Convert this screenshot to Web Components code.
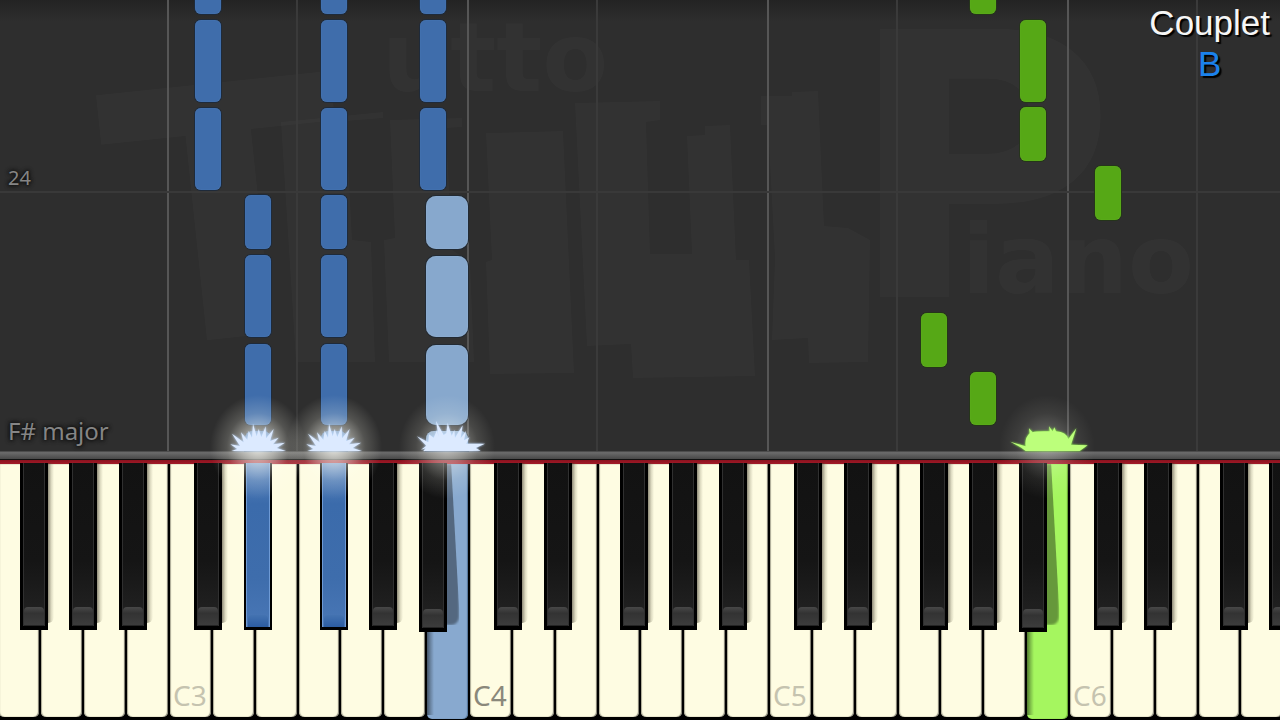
<!DOCTYPE html>
<html lang="en">
<head>
<meta charset="utf-8">
<title>Piano roll</title>
<style>
html,body{height:100%}
body{margin:0;background:#000;overflow:hidden}
</style>
</head>
<body>
<piano-app>
  <piano-roll>
    <bar-label slot="measure">24</bar-label>
    <bar-label slot="key">F# major</bar-label>
  </piano-roll>
  <piano-keyboard></piano-keyboard>
  <section-label slot="section">Couplet<span slot="part">B</span></section-label>
</piano-app>

<script>
const NS = 'http://www.w3.org/2000/svg';
const define = (name, html, setup) => customElements.define(name, class extends HTMLElement {
  constructor() {
    super();
    this.attachShadow({ mode: 'open' }).innerHTML = html;
  }
  connectedCallback() { if (setup && !this.ready) { this.ready = true; setup(this, this.shadowRoot); } }
});

/* Lanes of one octave, in 300ths of its width: semitone -> [left, width] */
const LANES = { 1: [27, 26], 3: [77, 26], 6: [153, 26], 8: [202, 26], 10: [252, 26], 11: [258, 42] };
const laneLeft = (octave, semitone) => (octave - 2) * 300 - 132 + LANES[semitone][0];
const pct = v => `${v / 12.8}%`;

define('piano-app', `
<style>
:host{display:flex;flex-direction:column;position:relative;height:100vh;min-height:400px;overflow:hidden;background:#000;font-family:"Noto Sans",sans-serif}
::slotted(piano-roll){flex:1}
.section{position:absolute;top:2px;right:10px;z-index:4}
</style>
<slot></slot><div class="section"><slot name="section"></slot></div>`);

define('section-label', `
<style>
:host{display:grid;justify-items:center;font:35px/41px "Liberation Sans",Arial,sans-serif;color:#f6f6f6;text-shadow:2px 2px 1px #000}
::slotted(span){color:#1b82ec}
</style>
<div><slot></slot></div><slot name="part"></slot>`);

define('bar-label', `
<style>
:host{display:block;color:#858585;text-shadow:0 0 3px #111,0 0 4px #111,0 0 5px #151515}
</style><slot></slot>`);

define('roll-note', `
<style>
:host{display:block;position:absolute;box-sizing:border-box;border-radius:6px;background:#3f6dab;box-shadow:0 0 0 1px #1e2a3a,inset 0 0 1px #6290cc}
:host([tone=light]){border-radius:10px;background:#87a8cd;box-shadow:0 0 0 1px #222a33,inset 0 0 1px #b4cde8}
:host([tone=green]){background:#56a816;box-shadow:0 0 0 1px #25351a,inset 0 0 1px #75c435}
</style>`);

define('note-flare', `
<style>
:host{display:block;position:absolute;bottom:0;width:0;height:0;z-index:3;pointer-events:none}
.glow{position:absolute;left:-48px;top:-56px;width:96px;height:104px;background:radial-gradient(closest-side,rgba(255,255,248,.8),rgba(255,255,245,.5) 35%,rgba(255,255,240,.18) 65%,transparent)}
:host([tone=green]) .glow{opacity:.4}
:host([tone=light]) .glow{opacity:.7}
svg{position:absolute;left:-32px;bottom:0;overflow:visible;filter:drop-shadow(0 0 1px #b9d7ff)}
:host([tone=green]) svg{filter:drop-shadow(0 0 1px #8cff45)}
</style><div class="glow"></div>`, (el, root) => {
  const shapes = {
    blue: ['#dceaff', 'M16 90 34 84 13 70 42 75 18 38 53 64 45 34 64 56 68 30 78 50 81 8 92 46 98 24 106 48 119 16 120 52 143 24 132 60 158 50 141 70 177 65 152 81 180 90Z'],
    light: ['#dceaff', 'M25 90 32 82 18 86 34 74 6 46 40 64 42 40 56 50 66 27 71 48 63 0 86 42 94 36 98 6 110 44 118 27 120 50 143 13 137 52 153 30 147 58 163 49 154 68 210 68 182 81 197 89 170 90Z'],
    green: ['#bcff7b', 'M56 90 43 80 10 62 56 76 Q52 52 68 37 L66 22 77 34 Q86 30 128 31 L126 16 137 31 142 19 147 31 Q178 33 184 54 L208 22 192 71 242 73 218 90Z']
  };
  const tone = el.getAttribute('tone');
  const [fill, d] = shapes[tone || 'blue'];
  const wide = tone ? 70 : 62;
  const svg = document.createElementNS(NS, 'svg');
  svg.setAttribute('viewBox', `0 0 ${wide * 3} 90`);
  svg.setAttribute('width', wide);
  svg.setAttribute('height', 30);
  svg.setAttribute('aria-hidden', 'true');
  if (tone === 'green') svg.style.left = '-40px';
  const path = document.createElementNS(NS, 'path');
  path.setAttribute('d', d);
  path.setAttribute('fill', fill);
  svg.append(path);
  root.append(svg);
});

define('roll-watermark', `
<style>
:host{display:block;position:absolute;inset:0;pointer-events:none}
svg{width:100%;height:100%}
text{font-family:"DejaVu Sans",sans-serif;font-weight:bold}
</style>
<svg viewBox="0 0 1280 451" preserveAspectRatio="xMidYMax meet" fill="rgb(255,255,255)" fill-opacity=".022">
<path d="M281 122 383 112 383 118 346 121 352 240 371 242 375 362 296 362Z"/>
<path d="M390 120 462 118 462 127 446 128 452 250 470 262 474 362 389 362 384 240 395 238Z"/>
<path d="M486 133 563 131 574 373 490 374 486 262 492 260Z"/>
<path d="M575 103 660 101 660 120 646 122 650 254 692 254 687 136 705 135 705 126 730 125 736 260 749 260 755 376 633 378 631 344 587 346Z"/>
<path d="M761 96 792 96 792 92 818 91 824 226 848 228 870 240 868 362 809 363 808 338 772 340 775 258 768 125 761 125Z"/>
<text x="106" y="336" font-size="350" transform="rotate(-6 240 200)">T</text>
<text x="382" y="91" font-size="96">utto</text>
<text x="846" y="297" font-size="368">P</text>
<text x="962" y="293" font-size="96">iano</text>
</svg>`);

define('piano-roll', `
<style>
:host{display:block;position:relative;background:linear-gradient(#232323,#2e2e2e 22px,#2e2e2e)}
.lanes{position:absolute;inset:0;display:grid;grid-template-columns:repeat(5,1fr);width:calc(100% * 75 / 64);margin-left:calc(100% * -33 / 320)}
.octave{display:grid;grid-template-columns:3fr 4fr}
.octave i{margin-left:-1px;border-left:2px solid #3a3a3a}
.octave i:first-child{border-color:#565656}
.beat{position:absolute;left:0;right:0;bottom:258px;height:2px;background:#393939}
.measure,.key{position:absolute;left:8px}
.measure{bottom:261px;font-size:20px;line-height:24px}
.key{bottom:5px;font-size:24px;line-height:30px}
</style>
<roll-watermark></roll-watermark>
<div class="lanes"></div><div class="beat"></div>
<div class="notes"></div>
<div class="measure"><slot name="measure"></slot></div>
<div class="key"><slot name="key"></slot></div>`, (el, root) => {
  root.querySelector('.lanes').innerHTML = '<div class="octave"><i></i><i></i></div>'.repeat(5);
  /* octave, semitone, tone, [start above the keyboard, length]... */
  const notes = [
    [3, 1, '', [[261, 82], [349, 82], [437, 82]]],
    [3, 3, '', [[0, 20], [26, 81], [114, 82], [202, 54]]],
    [3, 6, '', [[0, 20], [26, 81], [114, 82], [202, 54], [261, 82], [349, 82], [437, 82]]],
    [3, 10, '', [[261, 82], [349, 82], [437, 82]]],
    [3, 11, 'light', [[0, 20], [26, 80], [114, 81], [202, 53]]],
    [5, 6, 'green', [[84, 54]]],
    [5, 8, 'green', [[26, 53], [437, 54]]],
    [5, 10, 'green', [[290, 54], [349, 82]]],
    [6, 1, 'green', [[231, 54]]]
  ];
  const layer = root.querySelector('.notes');
  for (const [octave, semitone, tone, spans] of notes) for (const [start, length] of spans) {
    const note = document.createElement('roll-note');
    if (tone) note.setAttribute('tone', tone);
    note.style.cssText = `left:${pct(laneLeft(octave, semitone))};width:${pct(LANES[semitone][1])};bottom:${start}px;height:${length}px`;
    if (start === 0) note.style.borderRadius = '8px 8px 0 0';
    layer.append(note);
  }
  for (const [octave, semitone, tone] of [[3, 3, ''], [3, 6, ''], [3, 11, 'light'], [5, 11, 'green']]) {
    const flare = document.createElement('note-flare');
    if (tone) flare.setAttribute('tone', tone);
    flare.style.left = pct(laneLeft(octave, semitone) + LANES[semitone][1] / 2);
    layer.append(flare);
  }
});

define('white-key', `
<style>
:host{display:block;min-width:0}
button{position:relative;display:flex;align-items:flex-end;box-sizing:border-box;width:calc(100% - 2px);height:253px;margin:0 0 0 2px;padding:0 0 6px 3px;border:0;border-radius:0 0 5px 5px;background:#fefce2;box-shadow:inset -1px 0 1px #77756a,inset 1px 0 1px #aaa894;font:28px/32px "Noto Sans",sans-serif;color:#c5c3af;overflow:hidden}
:host([current]) button{color:#8a887b}
:host([pressed]) button{height:255px;background:#88a9cf;box-shadow:inset -1px 0 1px #527296}
:host([pressed=green]) button{background:#a5f65f;box-shadow:inset -1px 0 1px #609c2c}
:host([pressed]) button::before{content:"";position:absolute;left:0;top:0;width:32px;height:161px;background:rgba(0,0,0,.38);border-radius:0 0 8px 0;clip-path:polygon(0 0,24px 0,100% 90%,100% 100%,0 100%);filter:blur(1px)}
:host([pressed]) button::after{content:"";position:absolute;left:0;top:168px;bottom:4px;width:7px;background:linear-gradient(90deg,rgba(0,0,0,.5),rgba(0,0,0,.2) 55%,transparent)}
</style><button type="button"><slot></slot></button>`, (el, root) => {
  root.querySelector('button').setAttribute('aria-label', el.getAttribute('name'));
});

define('black-key', `
<style>
:host{display:block;position:relative;height:167px}
:host([low]){height:169px}
:host(:not([pressed]))::after{content:"";position:absolute;left:100%;top:0;width:6px;height:160px;border-radius:0 0 6px 0;background:linear-gradient(90deg,rgba(70,65,50,.6),rgba(90,85,60,.2) 55%,transparent)}
:host([low])::after{display:none}
button{position:relative;display:block;box-sizing:border-box;width:100%;height:100%;margin:0;padding:0 3px 4px;border:0;background:#000}
.top{display:block;height:100%;box-sizing:border-box;border:solid #303030;border-width:0 1px;background:linear-gradient(#121212,#151515 60%,#242424)}
.tip{position:absolute;left:4px;right:4px;bottom:5px;height:18px;border-radius:4px 4px 0 0;background:linear-gradient(#484848,#333 35%,#3c3c3c)}
:host([pressed]) button{padding:0 2px 3px}
:host([pressed]) .top{border-color:#6e9ad5;background:linear-gradient(#5984bf,#3b6bab 25%,#3e6dac 70%,#4977b6)}
:host([pressed]) .tip{bottom:3px;height:12px;background:linear-gradient(#4473b1,#2c5ca1)}
</style><button type="button"><span class="top"></span><span class="tip"></span></button>`, (el, root) => {
  root.querySelector('button').setAttribute('aria-label', el.getAttribute('name'));
});

define('piano-octave', `
<style>
:host{display:grid;min-width:0}
.white,.black{grid-area:1/1;display:grid}
.white{grid-template-columns:repeat(7,1fr)}
.black{grid-template-columns:26fr 28fr 22fr 28fr 48fr 28fr 21fr 28fr 22fr 28fr 21fr;align-items:start;margin-top:-1px;pointer-events:none}
black-key{pointer-events:auto}
</style><div class="white"></div><div class="black"></div>`, (el, root) => {
  const n = el.getAttribute('number');
  const pressed = { 'D#3': 'blue', 'F#3': 'blue', 'B3': 'blue', 'B5': 'green' };
  const make = (tag, name) => {
    const key = document.createElement(tag);
    key.setAttribute('name', name);
    if (pressed[name]) key.setAttribute('pressed', pressed[name]);
    return key;
  };
  for (const letter of 'CDEFGAB') {
    const key = make('white-key', letter + n);
    if (letter === 'C' && n > 2) key.textContent = 'C' + n;
    if (letter + n === 'C4') key.setAttribute('current', '');
    root.querySelector('.white').append(key);
  }
  ['C', 'D', 'F', 'G', 'A'].forEach((letter, i) => {
    const key = make('black-key', `${letter}#${n}`);
    key.style.gridColumn = 2 + i * 2;
    if (letter === 'A' && pressed['B' + n]) key.setAttribute('low', '');
    root.querySelector('.black').append(key);
  });
});

define('piano-keyboard', `
<style>
:host{display:block;flex:none;background:#000}
.rail{height:8px;border-bottom:1px solid #111;background:linear-gradient(#3e3e3e,#6b6b6b 20%,#555 70%,#484848)}
.felt{height:4px;background:linear-gradient(#8a121e,#a31a28)}
.keys{display:grid;grid-template-columns:repeat(5,1fr);width:calc(100% * 75 / 64);margin-left:calc(100% * -33 / 320);height:256px}
</style><div class="rail"></div><div class="felt"></div><div class="keys"></div>`, (el, root) => {
  for (let n = 2; n <= 6; n++) {
    const octave = document.createElement('piano-octave');
    octave.setAttribute('number', n);
    root.querySelector('.keys').append(octave);
  }
});
</script>
</body>
</html>
